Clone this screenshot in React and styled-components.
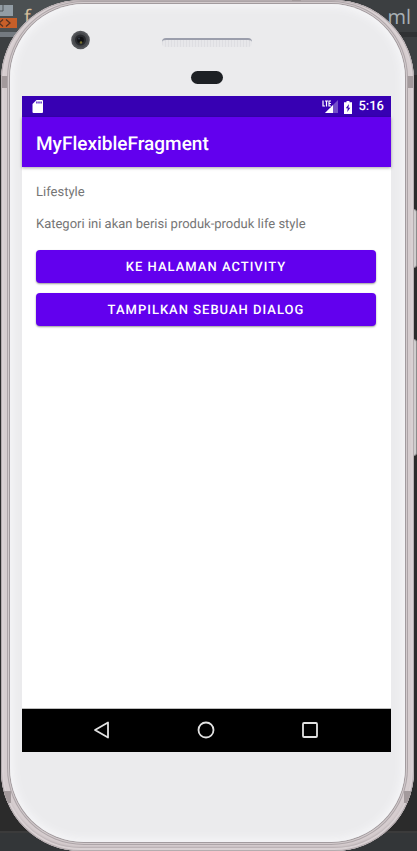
import React from "react";
import styled, { createGlobalStyle } from "styled-components";

const GlobalStyle = createGlobalStyle`
  *, *::before, *::after { box-sizing: border-box; }
  body {
    margin: 0;
    background: #2b2b2b;
    font-family: Roboto, sans-serif;
    text-rendering: geometricPrecision;
  }
`;

const Desktop = styled.div`
  position: relative;
  display: flex;
  min-height: 100vh;
  padding: 0 3px 0 1px;
  overflow: hidden;
  background: linear-gradient(#3c3f41 0 35px, #2f3133 35px 37px, #3c3f41 37px 75px, #2b2b2b 75px);
`;

const EditorTab = styled.div`
  position: absolute;
  inset: 0 0 auto;
  display: flex;
  justify-content: space-between;
  height: 37px;
  padding-right: 6px;
  background: linear-gradient(90deg, #4b5052 50%, #3c3f41 50%);
  border-bottom: 5px solid;
  border-image: linear-gradient(90deg, #747a80 50%, #303234 50%) 1;
  font: 20px/34px "Open Sans", sans-serif;
`;

const TabStart = styled.span`
  display: flex;
  gap: 7px;
  color: #d5bd9b;
`;

const TabEnd = styled.span`
  color: #a8b0b5;
`;

const StatusStrip = styled.div`
  position: absolute;
  inset: auto 0 0;
  height: 20px;
  background: #333638;
  border-top: 2px solid #3b3b3b;
`;

const SideKey = styled.span`
  position: absolute;
  right: 0;
  top: ${(p) => p.$top}px;
  width: 5px;
  height: ${(p) => p.$height}px;
  border-radius: 0 3px 3px 0;
  border: 1px solid #8c8a8b;
  background: #cfcdcd;
`;

const Phone = styled.main`
  position: relative;
  flex: 1;
  display: flex;
  min-width: 0;
  padding: 4px 9px 9px 9px;
  border-radius: 80px;
  overflow: hidden;
  background: #d6cdcf;
  box-shadow:
    inset 0 0 0 1px #b5acaf,
    inset 0 0 0 3px #d9d1d3,
    inset 0 -3px 3px #8d8588;
`;

const Antenna = styled.span`
  position: absolute;
  background: #a39a9c;
  ${(p) => (p.$side === "top"
    ? "top: 0; right: 113px; width: 9px; height: 4px;"
    : `${p.$side}: ${p.$low ? 2 : 1}px; width: 8px; height: 12px;`)}
  ${(p) => p.$side !== "top" && (p.$low ? "bottom: 48px;" : "top: 76px;")}
`;

const Face = styled.div`
  position: relative;
  flex: 1;
  min-width: 0;
  display: flex;
  flex-direction: column;
  padding: 0 14px 0 12px;
  border-radius: 74px;
  background: #ebebed;
  box-shadow:
    inset 0 0 9px 3px #f6f6f8,
    0 0 0 1px #a29b9e,
    0 0 0 2px #d3cbcd,
    0 0 0 3px #ada5a8;
`;

const TopBezel = styled.div`
  display: grid;
  grid-template-columns: 1fr 90px 1fr;
  grid-template-rows: 21px 19px;
  row-gap: 19px;
  height: 92px;
  padding-top: 26px;
`;

const CameraSlot = styled.div`
  padding-left: 49px;
`;

const Speaker = styled.div`
  height: 9px;
  margin-top: 8px;
  border-radius: 4px;
  border-top: 2px solid #9b9eac;
  background: repeating-linear-gradient(90deg, #dedee2 0 1px, #e7e7ea 1px 3px);
`;

const Sensor = styled.div`
  grid-column: 2;
  justify-self: center;
  width: 32px;
  height: 13px;
  margin-top: 1px;
  border-radius: 7px;
  background: #1d2024;
`;

const Screen = styled.section`
  flex: 1;
  display: flex;
  flex-direction: column;
  background: #fff;
`;

const StatusBar = styled.div`
  display: flex;
  align-items: center;
  height: 21px;
  padding: 1px 7px 0 10px;
  background: #3700b3;
  color: #fff;
  font-size: 13px;
  font-weight: 500;
  line-height: 20px;
`;

const StatusItems = styled.div`
  display: flex;
  align-items: center;
  gap: 6px;
  margin-left: auto;
`;

const AppBar = styled.header`
  display: flex;
  align-items: center;
  height: 50px;
  padding: 3px 14px 0;
  background: #6200ee;
  box-shadow: 0 1px 3px rgba(0, 0, 0, 0.35);
`;

const Title = styled.h1`
  margin: 0;
  color: #fff;
  font-size: 19px;
  font-weight: 500;
  line-height: 24px;
`;

const Content = styled.div`
  flex: 1;
  display: flex;
  flex-direction: column;
  gap: 16px;
  padding: 18px 15px 16px 14px;
`;

const Paragraph = styled.p`
  margin: 0;
  color: #757575;
  font-size: 13px;
  line-height: 16px;
`;

const Actions = styled.div`
  display: flex;
  flex-direction: column;
  gap: 10px;
  padding-top: 1px;
`;

const ActionButton = styled.button`
  height: 33px;
  padding: 3px 0 0;
  border: 0;
  border-radius: 4px;
  background: #6200ee;
  box-shadow: 0 1px 2px rgba(0, 0, 0, 0.4);
  color: #fff;
  font: 500 13px/16px Roboto, sans-serif;
  letter-spacing: 1px;
  text-rendering: inherit;
`;

const NavBar = styled.nav`
  display: flex;
  justify-content: center;
  gap: 80px;
  height: 43px;
  padding-right: 2px;
  background: #000;
  box-shadow: 0 -1px #bdbdbd;
`;

const NavButton = styled.button`
  display: grid;
  place-items: center;
  width: 24px;
  padding: 0 0 1px;
  border: 0;
  background: none;
`;

const BottomBezel = styled.div`
  height: 90px;
`;

function XmlFileIcon() {
  return (
    <svg width="17" height="37" viewBox="0 0 17 37" aria-hidden="true">
      <path d="M0 5h13v11H0z" fill="#929da5" />
      <path d="M0 11h3V5" fill="none" stroke="#50565b" strokeWidth="1" />
      <path d="M0 18h17v10H0z" fill="#c75f29" />
      <path d="M3 19.500l-4 3.500 4 3.500M6 19.500l4 3.500-4 3.500" fill="none" stroke="#553222" strokeWidth="1.300" />
    </svg>
  );
}

function Camera() {
  return (
    <svg width="20" height="20" viewBox="0 0 20 20" aria-hidden="true">
      <circle cx="9.500" cy="10" r="9.300" fill="#55575b" />
      <circle cx="9.500" cy="10" r="7.500" fill="#46484c" />
      <circle cx="9.500" cy="10" r="5.500" fill="#27292d" />
      <circle cx="9.500" cy="10" r="3.300" fill="#101114" />
      <circle cx="8" cy="8.500" r="1" fill="#343c48" />
      <circle cx="10" cy="12.500" r="1.300" fill="#77702f" />
    </svg>
  );
}

function SdCard() {
  return (
    <svg width="12" height="14" viewBox="0 0 12 14" aria-hidden="true">
      <path d="M4.500 0H10q1 0 1 1v11q0 1-1 1H1.500q-1 0-1-1V4z" fill="#fff" />
      <path d="M4.300 1.500h1.200v2H4.300zM6.400 1.500h1.200v2H6.400zM8.500 1.500h1.200v2H8.500z" fill="#3700b3" />
    </svg>
  );
}

function LteSignal() {
  return (
    <svg width="16" height="14" viewBox="0 0 16 14" aria-label="LTE">
      <path d="M16 0v13H3z" fill="#7450c9" />
      <path d="M11 5v8H3z" fill="#fff" />
      <path d="M1.500 1v5h2M3.500 1.500h3M5 1.500v5M9 1.500H7.500v4.500H9M7.500 3.500H9" fill="none" stroke="#3700b3" strokeWidth="2.400" />
      <path d="M1 0.500v5.500h2M3 1h3M4.500 1v5.500M9 1H7v5h2M7 3.500h2" fill="none" stroke="#fff" strokeWidth="1.200" />
    </svg>
  );
}

function Battery() {
  return (
    <svg width="8" height="13" viewBox="0 0 8 13" aria-label="Charging">
      <path d="M2.500 0h3v1.300H8V13H0V1.300h2.500z" fill="#fff" />
      <path d="M5 3L1.800 7.300h1.900L3.300 11l3-4.300H4.400z" fill="#3700b3" />
    </svg>
  );
}

const navIcons = [
  { label: "Back", shape: <path d="M2 9L15 1.500v15z" /> },
  { label: "Home", shape: <circle cx="9" cy="9" r="7.500" /> },
  { label: "Overview", shape: <rect x="2" y="2" width="14" height="14" rx="1" /> },
];

export default function App() {
  return (
    <>
      <GlobalStyle />
      <Desktop>
        <EditorTab>
          <TabStart><XmlFileIcon />f</TabStart>
          <TabEnd>ml</TabEnd>
        </EditorTab>
        <StatusStrip />
        <SideKey $top={209} $height={59} />
        <SideKey $top={339} $height={117} />
        <Phone>
          <Antenna $side="top" />
          <Antenna $side="left" />
          <Antenna $side="right" />
          <Antenna $side="left" $low />
          <Antenna $side="right" $low />
          <Face>
            <TopBezel>
              <CameraSlot><Camera /></CameraSlot>
              <Speaker />
              <Sensor />
            </TopBezel>
            <Screen>
              <StatusBar>
                <SdCard />
                <StatusItems>
                  <LteSignal />
                  <Battery />
                  <time>5:16</time>
                </StatusItems>
              </StatusBar>
              <AppBar><Title>MyFlexibleFragment</Title></AppBar>
              <Content>
                <Paragraph>Lifestyle</Paragraph>
                <Paragraph>Kategori ini akan berisi produk-produk life style</Paragraph>
                <Actions>
                  <ActionButton type="button">KE HALAMAN ACTIVITY</ActionButton>
                  <ActionButton type="button">TAMPILKAN SEBUAH DIALOG</ActionButton>
                </Actions>
              </Content>
              <NavBar>
                {navIcons.map(({ label, shape }) => (
                  <NavButton key={label} type="button" aria-label={label}>
                    <svg width="18" height="18" viewBox="0 0 18 18" fill="none" stroke="#e2e2e2" strokeWidth="1.800" strokeLinejoin="round">
                      {shape}
                    </svg>
                  </NavButton>
                ))}
              </NavBar>
            </Screen>
            <BottomBezel />
          </Face>
        </Phone>
      </Desktop>
    </>
  );
}
